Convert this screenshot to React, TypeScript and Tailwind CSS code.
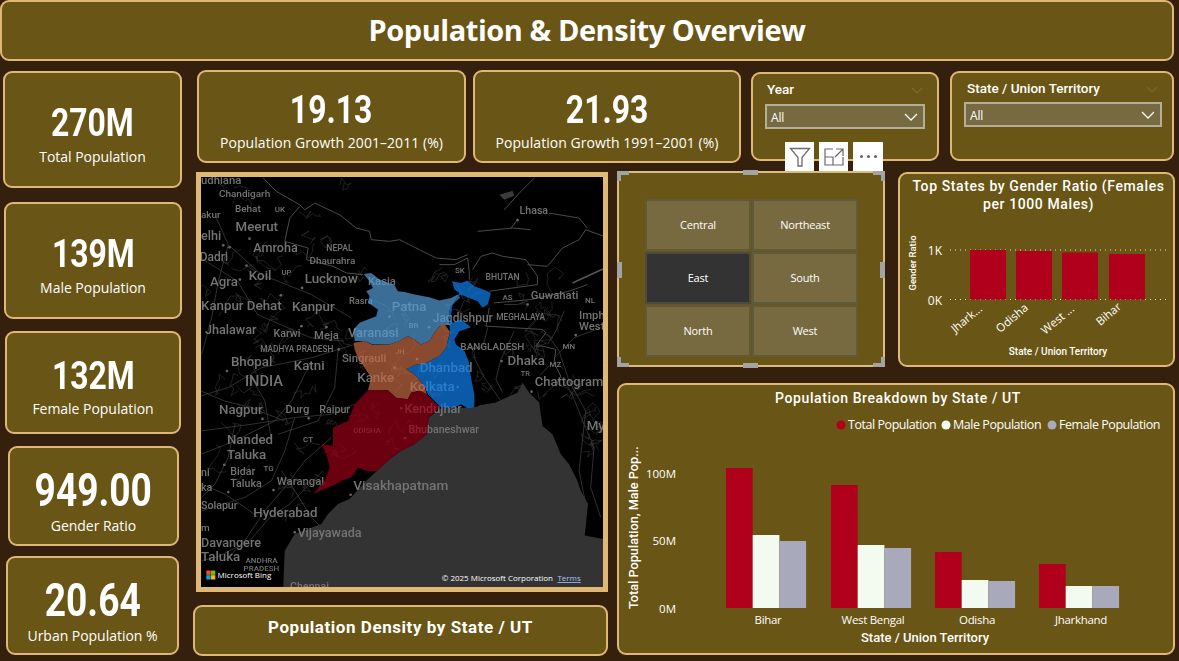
const CARD = 'border-2 border-[#e0b876] bg-[#695515] rounded-[9px]'
const DIN = "font-['Roboto',sans-serif]"
const UI = "font-['Open_Sans',sans-serif]"

type Kpi = { value: string; label: string; box: string; num: string; sub: string }

const KPIS: Kpi[] = [
  { value: '270M', label: 'Total Population', box: 'ml-[3px] mt-[1px] w-[179px] h-[117px] pt-[30px]', num: 'text-[38px] leading-[40px] scale-x-[0.84]', sub: 'mt-[4px]' },
  { value: '139M', label: 'Male Population', box: 'ml-[4px] mt-[14px] w-[178px] h-[117px] pt-[30px]', num: 'text-[38px] leading-[40px] scale-x-[0.84]', sub: 'mt-[4px]' },
  { value: '132M', label: 'Female Population', box: 'ml-[5px] mt-[12px] w-[176px] h-[103px] pt-[23px]', num: 'text-[38px] leading-[40px] scale-x-[0.84]', sub: 'mt-[3px]' },
  { value: '949.00', label: 'Gender Ratio', box: 'ml-[8px] mt-[12px] w-[171px] h-[100px] pt-[19px]', num: 'text-[47px] leading-[46px] scale-x-[0.79]', sub: 'mt-[3px]' },
  { value: '20.64', label: 'Urban Population %', box: 'ml-[6px] mt-[10px] w-[173px] h-[99px] pt-[19px]', num: 'text-[47px] leading-[46px] scale-x-[0.79]', sub: 'mt-[3px]' },
]

function KpiCard({ value, label, box, num, sub }: Kpi) {
  return (
    <div className={`${CARD} ${box} flex flex-col items-center text-white`}>
      <div className={`${DIN} ${num} font-bold`}>{value}</div>
      <div className={`${UI} ${sub} text-[14px] leading-[20px] tracking-[-0.03px]`}>{label}</div>
    </div>
  )
}

function GrowthCard({ value, label, box }: { value: string; label: string; box: string }) {
  return (
    <div className={`${CARD} ${box} h-[93px] pt-[18px] flex flex-col items-center text-white`}>
      <div className={`${DIN} text-[38px] font-bold leading-[40px] scale-x-[0.84]`}>{value}</div>
      <div className={`${UI} text-[14px] leading-[20px] mt-[3px] tracking-[0.05px]`}>{label}</div>
    </div>
  )
}

function Chevron({ className }: { className: string }) {
  return (
    <svg viewBox="0 0 14 8" className={className} fill="none" stroke="currentColor" strokeWidth="1.3">
      <path d="M1 1l6 6 6-6" />
    </svg>
  )
}

function Dropdown({ title, box, head, field }: { title: string; box: string; head: string; field: string }) {
  return (
    <div className={`${CARD} ${box} relative text-white`}>
      <div className={`${DIN} ${head} text-[13.5px] font-medium leading-[18px]`}>{title}</div>
      <Chevron className="absolute right-[14px] top-[13px] w-[12px] h-[7px] text-[#7f6c2c]" />
      <div className={`${field} h-[25px] bg-[#786a40] border-2 border-[#b5ae98] flex items-center justify-between pl-[4px] pr-[5px]`}>
        <span className={`${UI} text-[12px] tracking-[-0.2px] pt-[2px]`}>All</span>
        <Chevron className="w-[14px] h-[8px] text-white" />
      </div>
    </div>
  )
}

const REGIONS = [
  { name: 'Central', on: false },
  { name: 'Northeast', on: false },
  { name: 'East', on: true },
  { name: 'South', on: false },
  { name: 'North', on: false },
  { name: 'West', on: false },
]

const HANDLE = 'absolute bg-[#a3a3a3]'

function Slicer() {
  return (
    <div className="relative w-[268px] h-[196px] border-2 border-[#d9bb84] bg-[#695515] pl-[26px] pt-[26px]">
      <div className="grid grid-cols-[106px_106px] grid-rows-[52px_52px_52px] gap-[1px]">
        {REGIONS.map((r) => (
          <div
            key={r.name}
            className={`${UI} flex items-center justify-center text-[11px] tracking-[-0.2px] text-white border-2 ${
              r.on ? 'bg-[#333333] border-[#4d4b3e]' : 'bg-[#786a40] border-[#5f5a3a]'
            }`}
          >
            {r.name}
          </div>
        ))}
      </div>
      <div className={`${HANDLE} left-[124px] -top-[3px] w-[15px] h-[5px]`} />
      <div className={`${HANDLE} left-[124px] -bottom-[3px] w-[15px] h-[5px]`} />
      <div className={`${HANDLE} -left-[2px] top-[89px] w-[5px] h-[16px]`} />
      <div className={`${HANDLE} -right-[2px] top-[89px] w-[5px] h-[16px]`} />
      <div className={`${HANDLE} -left-[2px] -top-[2px] w-[12px] h-[4px]`} />
      <div className={`${HANDLE} -left-[2px] -top-[2px] w-[4px] h-[10px]`} />
      <div className={`${HANDLE} -right-[2px] -top-[2px] w-[12px] h-[4px]`} />
      <div className={`${HANDLE} -right-[2px] -top-[2px] w-[4px] h-[10px]`} />
      <div className={`${HANDLE} -left-[2px] -bottom-[2px] w-[12px] h-[4px]`} />
      <div className={`${HANDLE} -left-[2px] -bottom-[2px] w-[4px] h-[10px]`} />
      <div className={`${HANDLE} -right-[2px] -bottom-[2px] w-[12px] h-[4px]`} />
      <div className={`${HANDLE} -right-[2px] -bottom-[2px] w-[4px] h-[10px]`} />
      <div className="absolute left-[166px] -top-[31px] flex">
        <div className="w-[29px] h-[29px] bg-white flex items-center justify-center">
          <svg viewBox="0 0 22 22" className="w-[22px] h-[22px]" fill="none" stroke="#6b6b6b" strokeWidth="1.3">
            <path d="M1.5 2.5h19L13 11.5V20H9v-8.5z" />
          </svg>
        </div>
        <div className="w-[29px] h-[29px] ml-[5px] bg-white flex items-center justify-center">
          <svg viewBox="0 0 20 18" className="w-[20px] h-[18px]" fill="none" stroke="#6b6b6b" strokeWidth="1.2">
            <path d="M9 1H1v16h18V9M1 9h8v8M12 1h7v7M19 1l-8 8" />
          </svg>
        </div>
        <div className="w-[30px] h-[29px] ml-[5px] bg-white flex items-center justify-center gap-[4px]">
          <span className="w-[3px] h-[3px] rounded-full bg-[#666666]" />
          <span className="w-[3px] h-[3px] rounded-full bg-[#666666]" />
          <span className="w-[3px] h-[3px] rounded-full bg-[#666666]" />
        </div>
      </div>
    </div>
  )
}

// name, x, baseline, size - all in the 3x map crop's coordinates
const PLACES: [string, number, number, number][] = [
  ['udhiana', 18, 38, 34], ['Chandigarh', 72, 78, 30], ['akur', 18, 140, 30], ['Behat', 120, 122, 30], ['UK', 240, 122, 24],
  ['Meerut', 122, 178, 40], ['elhi', 18, 205, 38], ['Amroha', 175, 242, 38], ['Dadri', 14, 270, 36],
  ['NEPAL', 395, 240, 26], ['Dhaurahra', 344, 278, 30], ['UP', 260, 310, 23], ['Koil', 162, 325, 40], ['Agra', 45, 344, 40],
  ['Lucknow', 330, 334, 40], ['Kanpur Dehat', 18, 415, 40], ['Kanpur', 292, 420, 40], ['Rasra', 463, 397, 28],
  ['Jhalawar', 30, 490, 38], ['Karwi', 236, 498, 32], ['Meja', 358, 505, 34], ['MADHYA PRADESH', 196, 542, 25],
  ['Bhopal', 108, 585, 40], ['Katni', 297, 598, 40], ['INDIA', 150, 645, 44], ['Nagpur', 72, 730, 40], ['Durg', 272, 725, 34],
  ['Raipur', 374, 725, 32], ['CT', 325, 812, 24], ['Nanded', 96, 820, 40], ['Taluka', 96, 866, 40], ['TG', 206, 900, 24],
  ['ni', 18, 915, 32], ['Bidar', 106, 912, 32], ['ka', 18, 960, 32], ['Taluka', 106, 948, 32], ['Warangal', 246, 942, 34],
  ['Solapur', 18, 1016, 32], ['Hyderabad', 175, 1040, 40], ['m', 18, 1080, 30], ['Vijayawada', 308, 1100, 38],
  ['Visakhapatnam', 476, 958, 41], ['Davangere', 18, 1128, 38], ['Taluka', 18, 1172, 40], ['ANDHRA', 152, 1176, 24],
  ['PRADESH', 146, 1200, 24], ['Chennai', 286, 1260, 32],
  ['Lhasa', 976, 128, 32], ['SK', 782, 306, 24], ['BHUTAN', 874, 326, 26], ['AS', 925, 387, 24], ['Guwahati', 1010, 384, 34],
  ['NL', 1173, 396, 24], ['MEGHALAYA', 906, 446, 25], ['Imphal', 1155, 443, 34], ['West', 1155, 478, 34],
  ['BANGLADESH', 798, 536, 30], ['MN', 1105, 535, 24], ['Dhaka', 940, 582, 40], ['MZ', 1066, 588, 24], ['TR', 980, 616, 22],
  ['Chattogram', 1022, 646, 39], ['My', 1178, 776, 40], ['Kendujhar', 630, 727, 38], ['Bhubaneshwar', 642, 785, 32],
  ['ODISHA', 476, 785, 23], ['Singrauli', 442, 572, 34], ['JH', 602, 550, 22], ['Kanke', 488, 632, 40], ['Kolkata', 646, 660, 40],
  ['Dhanbad', 676, 604, 40], ['Varanasi', 460, 498, 39], ['Patna', 592, 418, 40], ['BR', 642, 470, 24], ['Jagdishpur', 715, 452, 36],
  ['Kasia', 520, 340, 34],
]

const BORDERS = [
  'M205 20l40 40 70 40 15 15 30-20 75 35 50 40 40 10 5 25 55 5 30-5 60 30 50 25 60 5 35-15',
  'M315 105l-30 35-15 70 70 20-5 35 80 20 40 20 50 5',
  'M735 280h45l40-20 5 45 0 20M835 295l25-40 35-10 30 10 70 10 35 50v25l-145 20',
  'M1000 280l60 5 45-55 50-25 20-30 55 20',
  'M885 410l-10 55 170 10 10 10-30 40 20 0 40 10-5 40 20 40-15 30',
  'M850 180l105-10 55 5M970 145l-20 25M930 115l45-50 45-45M1065 125l90 15 25 30',
  'M1180 340l-55 20-115 25-110 10',
]

const ROADS = [
  'M60 130l40 90 100 90 150 60 120 70M18 260l110 70 60 100 160 70 100 10M100 220l-30 110-20 110-30 110',
  'M480 520l-130 40-150 30-100 60-100 30M350 570l-60 120-50 60-120 60-100 40M430 540l-10 110-50 100-120 40',
  'M480 700l-70 30-110 10-130 20-150 20M300 740l-30 100-40 90-80 50-130 40M410 800l-80 70-60 80-60 70-60 90-60 60',
  'M385 900l-100 100-60 40-60 70-100 50-45 10M260 900l40 60 50 80 40 40M190 1040l-40-30-60-40-70-30',
  'M18 660l70 30 80 20 100 40M120 760l-20 100-40 80-40 40M170 620l40 70 20 120M1130 660l40 100 30 70-10 120 30 90',
  'M880 470l-15 60-60 5M960 480l-40 85-15 60 20 40M1060 490l35 50 30 90 50 90-20 180 20 100M840 560l30 60 50 70',
  'M1080 560l60-60 80-30M1110 420l-25 60-25 40M930 400l40 0 30-10',
]

// thin road network: seeded walks, drawn under the sea so the water stays clean
function buildLanes() {
  let seed = 1987
  const rnd = () => {
    seed = (seed * 16807) % 2147483647
    return seed / 2147483647
  }
  const lanes: string[] = []
  for (let i = 0; i < 150; i++) {
    // the top right of the map (Tibet) is nearly empty
    const x = 18 + rnd() * 1209
    const y = (x > 480 ? 290 : 18) + rnd() * 1000
    let d = `M${x.toFixed(0)} ${y.toFixed(0)}`
    for (let s = 0; s < 7; s++) {
      d += `l${(rnd() * 50 - 25).toFixed(0)} ${(rnd() * 50 - 25).toFixed(0)}`
    }
    lanes.push(d)
  }
  return lanes
}

const LANES = buildLanes()

const DOTS = [
  [85, 222], [104, 228], [164, 202], [155, 283], [135, 325], [322, 350], [258, 372], [320, 465], [395, 468], [432, 535],
  [96, 600], [203, 744], [342, 742], [88, 882], [100, 964], [236, 958], [300, 1085], [468, 972], [970, 146], [1000, 400],
  [1145, 492], [922, 570], [1012, 662], [585, 436], [704, 468], [668, 564], [600, 590], [790, 648], [620, 712], [632, 802],
]

function MapView() {
  return (
    <div className="ml-[6px] mt-[1px] w-[412px] h-[420px] border-[5px] border-[#e0b876] bg-black overflow-hidden">
      <svg viewBox="18 18 1209 1230" className="block w-full h-full">
        <g className="blur-[0.4px]">
          {LANES.map((d) => (
            <path key={d} d={d} fill="none" stroke="#303030" strokeWidth="2" />
          ))}
          {ROADS.map((d) => (
            <path key={d} d={d} fill="none" stroke="#3a3a3a" strokeWidth="2.5" />
          ))}
          <path
            d="M1227 1105L1172 1095 1182 1000 1160 960 1150 930 1125 880 1100 850 1075 790 1045 765 1035 695 1005 665 985 635 970 665 935 680 905 695 860 702 840 710 740 712 703 740 697 790 660 820 620 840 585 865 545 902 515 930 465 985 430 1000 400 1030 380 1060 300 1090 270 1140 265 1253 1227 1253Z"
            fill="#333333"
          />
          {BORDERS.map((d) => (
            <path key={d} d={d} fill="none" stroke="#4a4a4a" strokeWidth="3" />
          ))}
          <path d="M915 70l40-12 5 15-30 12z" fill="#3a3a3a" />
          <path d="M1135 335l92-42" fill="none" stroke="#555555" strokeWidth="5" />
          {DOTS.map(([x, y]) => (
            <circle key={`${x}-${y}`} cx={x} cy={y} r="4" fill="#666666" />
          ))}
          {PLACES.map(([name, x, y, s]) => (
            <text key={`${name}-${x}`} x={x} y={y} fontSize={s} fontWeight="500" fill="#747474" fontFamily="Roboto, sans-serif">
              {name}
            </text>
          ))}
          <g transform="translate(435 270)" opacity="0.7">
            <path d="M72 38L95 35 120 55 165 72 175 90 195 92 225 100 270 108 300 118 335 110 355 100 362 108 345 125 332 140 328 170 330 190 300 195 285 215 270 240 245 250 225 235 205 225 180 240 150 250 125 250 100 250 75 240 45 240 42 205 60 185 110 165 115 145 85 125 90 105 80 90 100 80 90 60Z" fill="#539dd6" />
            <path d="M338 60L365 65 385 58 405 75 440 88 455 95 445 130 430 140 415 120 385 108 362 100 345 125 332 140 328 170 340 185 365 175 395 198 360 210 345 235 350 250 375 270 388 300 395 350 405 400 405 440 385 442 365 430 345 440 305 440 290 425 265 400 255 375 225 340 200 325 225 312 260 305 300 285 320 260 332 215 330 190 340 130 360 95 345 85Z" fill="#0f81f0" />
            <path d="M42 245L75 240 100 252 150 250 180 240 205 225 225 235 245 250 270 240 285 215 300 195 315 188 332 212 320 260 300 285 260 305 225 312 200 325 225 340 255 375 262 400 235 390 215 395 205 415 170 410 145 388 85 388 95 350 75 320 55 290 45 265Z" fill="#c56a45" />
            <path d="M85 388L145 388 170 410 205 415 215 395 245 390 262 400 302 438 268 470 262 520 225 550 185 570 150 595 110 632 80 630 55 620 35 650 5 660 -10 670 -35 680 -80 700 -45 660 -30 620 -40 580 -55 550 -20 555 -20 500 25 480 45 430Z" fill="#990017" />
          </g>
        </g>
        <rect x="34" y="1200" width="13" height="13" fill="#f25022" />
        <rect x="48" y="1200" width="13" height="13" fill="#7fba00" />
        <rect x="34" y="1214" width="13" height="13" fill="#00a4ef" />
        <rect x="48" y="1214" width="13" height="13" fill="#ffb900" />
        <text x="68" y="1223" fontSize="24" fill="#ffffff" fontFamily="Open Sans, sans-serif">Microsoft Bing</text>
        <text x="742" y="1232" fontSize="24" fill="#ffffff" fontFamily="Open Sans, sans-serif">© 2025 Microsoft Corporation</text>
        <text x="1090" y="1232" fontSize="24" fill="#a9c4ff" textDecoration="underline" fontFamily="Open Sans, sans-serif">Terms</text>
      </svg>
    </div>
  )
}

const SVG_DIN = 'Roboto, sans-serif'
const SVG_UI = 'Open Sans, sans-serif'

function GenderChart() {
  const bars = [
    { x: 970, y: 250, name: 'Jhark...', lx: 983, ly: 310 },
    { x: 1016, y: 251, name: 'Odisha', lx: 1029, ly: 309 },
    { x: 1062, y: 252.5, name: 'West ...', lx: 1075, ly: 310 },
    { x: 1109, y: 254, name: 'Bihar', lx: 1122, ly: 308 },
  ]
  return (
    <div className={`${CARD} ml-[13px] w-[277px] h-[195px] mt-[1px] overflow-hidden`}>
      <div className={`${DIN} text-[14px] font-medium leading-[18px] tracking-[0.6px] text-white text-center pt-[3px] pl-[10px] pr-[6px] h-[44px]`}>
        Top States by Gender Ratio (Females per 1000 Males)
      </div>
      <svg viewBox="900 218 273 147" className="block w-[273px] h-[147px]">
        <line x1="950" x2="1168" y1="250" y2="250" stroke="#e8e2c8" strokeDasharray="1 4" />
        <line x1="950" x2="1168" y1="299.5" y2="299.5" stroke="#e8e2c8" strokeDasharray="1 4" />
        <text x="942" y="255" fontSize="12" fill="#fff" textAnchor="end" fontFamily={SVG_UI}>1K</text>
        <text x="942" y="305" fontSize="12" fill="#fff" textAnchor="end" fontFamily={SVG_UI}>0K</text>
        <text transform="translate(916 263) rotate(-90)" fontSize="9.5" fontWeight="500" fill="#fff" textAnchor="middle" fontFamily={SVG_DIN}>
          Gender Ratio
        </text>
        {bars.map((b) => (
          <g key={b.name}>
            <rect x={b.x} y={b.y} width="36" height={299.5 - b.y} fill="#b0001c" />
            <text transform={`translate(${b.lx} ${b.ly}) rotate(-40)`} fontSize="11.5" fill="#fff" textAnchor="end" fontFamily={SVG_UI}>
              {b.name}
            </text>
          </g>
        ))}
        <text x="1058" y="355" fontSize="10" fontWeight="500" fill="#fff" textAnchor="middle" fontFamily={SVG_DIN}>
          State / Union Territory
        </text>
      </svg>
    </div>
  )
}

function PopulationChart() {
  const groups = [
    { name: 'Bihar', x: 726, h: [468, 535, 541] },
    { name: 'West Bengal', x: 831, h: [485, 545, 548] },
    { name: 'Odisha', x: 935, h: [552, 580, 581] },
    { name: 'Jharkhand', x: 1039, h: [564, 586, 586] },
  ]
  const colors = ['#b0001c', '#f3fbf0', '#a8aabb']
  const legend = [
    { name: 'Total Population', dot: 841, text: 848 },
    { name: 'Male Population', dot: 946, text: 953 },
    { name: 'Female Population', dot: 1052, text: 1059 },
  ]
  return (
    <div className={`${CARD} mt-[16px] w-[558px] h-[272px] overflow-hidden`}>
      <div className={`${DIN} text-[14px] font-medium leading-[18px] tracking-[0.6px] text-white text-center pt-[4px] pl-[4px]`}>
        Population Breakdown by State / UT
      </div>
      <svg viewBox="619 407 554 246" className="block w-[554px] h-[246px]">
        {legend.map((l, i) => (
          <g key={l.name}>
            <circle cx={l.dot} cy="425" r="4.5" fill={colors[i]} />
            <text x={l.text} y="429" fontSize="12.5" fill="#fff" fontFamily={SVG_UI} letterSpacing="-0.45">{l.name}</text>
          </g>
        ))}
        {[['100M', 478], ['50M', 545], ['0M', 613]].map(([t, y]) => (
          <text key={t} x="676" y={y} fontSize="11.5" fill="#fff" textAnchor="end" fontFamily={SVG_UI}>{t}</text>
        ))}
        <text transform="translate(638 609) rotate(-90)" fontSize="12.7" fontWeight="500" fill="#fff" fontFamily={SVG_DIN}>
          Total Population, Male Pop...
        </text>
        {groups.map((g) => (
          <g key={g.name}>
            {g.h.map((top, i) => (
              <rect key={i} x={g.x + i * 26.7} y={top} width="26.7" height={608 - top} fill={colors[i]} />
            ))}
            <text x={g.x + 42} y="624" fontSize="11.5" fill="#fff" textAnchor="middle" fontFamily={SVG_UI} letterSpacing="-0.3">{g.name}</text>
          </g>
        ))}
        <text x="925" y="642" fontSize="13" fontWeight="500" fill="#fff" textAnchor="middle" fontFamily={SVG_DIN}>
          State / Union Territory
        </text>
      </svg>
    </div>
  )
}

export default function App() {
  return (
    <div className="w-[1179px] h-[661px] bg-[#35200d] overflow-hidden">
      <div className={`${CARD} w-[1174px] h-[61px] flex items-center justify-center pb-[2px]`}>
        <h1 className={`${UI} text-[29px] font-bold text-white tracking-[-0.45px]`}>Population &amp; Density Overview</h1>
      </div>
      <div className="flex mt-[9px]">
        <div className="w-[190px] shrink-0 flex flex-col">
          {KPIS.map((k) => (
            <KpiCard key={k.label} {...k} />
          ))}
        </div>
        <div className="flex-1">
          <div className="flex items-start h-[101px]">
            <GrowthCard value="19.13" label="Population Growth 2001–2011 (%)" box="ml-[7px] w-[269px]" />
            <GrowthCard value="21.93" label="Population Growth 1991–2001 (%)" box="ml-[7px] w-[268px]" />
            <Dropdown title="Year" box="ml-[10px] mt-[2px] w-[188px] h-[89px]" head="pl-[14px] pt-[6px] pb-[6px]" field="ml-[12px] w-[160px]" />
            <Dropdown title="State / Union Territory" box="ml-[11px] mt-[1px] w-[224px] h-[90px]" head="pl-[15px] pt-[6px] pb-[5px]" field="ml-[12px] w-[198px]" />
          </div>
          <div className="flex">
            <div className="w-[427px] shrink-0">
              <MapView />
              <div className={`${CARD} ml-[3px] mt-[13px] w-[415px] h-[51px] flex items-center justify-center pb-[6px]`}>
                <span className={`${DIN} text-[17px] font-bold tracking-[0.55px] text-white`}>Population Density by State / UT</span>
              </div>
            </div>
            <div>
              <div className="flex">
                <Slicer />
                <GenderChart />
              </div>
              <PopulationChart />
            </div>
          </div>
        </div>
      </div>
    </div>
  )
}
